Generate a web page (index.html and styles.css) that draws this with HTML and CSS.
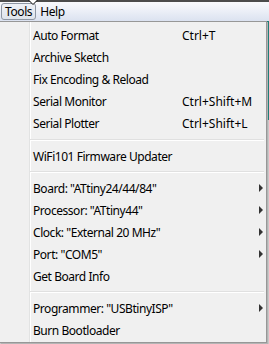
FILE: index.html
```html
<!DOCTYPE html>
<html lang="en">
<head>
  <meta charset="utf-8" />
  <title>Tools menu</title>
  <link rel="stylesheet" href="styles.css">
</head>
<body>
  <div id="window">
    <div id="menubar">
      <span class="top-item active">Tools</span>
      <span class="top-item">Help</span>
      <svg class="cursor" width="10" height="7" viewBox="0 0 10 7">
        <path d="M0.5 0 L5 4.5 L9.5 0" fill="#fff" stroke="#000" stroke-width="1"/>
      </svg>
    </div>

    <div id="menu">
      <div class="item"><span class="label">Auto Format</span><span class="shortcut">Ctrl+T</span></div>
      <div class="item"><span class="label">Archive Sketch</span></div>
      <div class="item"><span class="label">Fix Encoding &amp; Reload</span></div>
      <div class="item"><span class="label">Serial Monitor</span><span class="shortcut">Ctrl+Shift+M</span></div>
      <div class="item"><span class="label">Serial Plotter</span><span class="shortcut">Ctrl+Shift+L</span></div>
      <div class="separator first"></div>
      <div class="item"><span class="label">WiFi101 Firmware Updater</span></div>
      <div class="separator"></div>
      <div class="item"><span class="label">Board: "ATtiny24/44/84"</span><span class="arrow"></span></div>
      <div class="item"><span class="label">Processor: "ATtiny44"</span><span class="arrow"></span></div>
      <div class="item"><span class="label">Clock: "External 20 MHz"</span><span class="arrow"></span></div>
      <div class="item"><span class="label">Port: "COM5"</span><span class="arrow"></span></div>
      <div class="item"><span class="label">Get Board Info</span></div>
      <div class="separator"></div>
      <div class="item"><span class="label">Programmer: "USBtinyISP"</span><span class="arrow"></span></div>
      <div class="item"><span class="label">Burn Bootloader</span></div>
    </div>
  </div>
</body>
</html>
```

FILE: styles.css
```css
* {
  margin: 0;
  padding: 0;
  box-sizing: border-box;
}

body {
  background-color: #a0a0a0;
  font-family: "Noto Sans", "Open Sans", sans-serif;
  font-size: 12px;
  color: #000;
  width: 269px;
  height: 344px;
  overflow: hidden;
}

#window {
  width: 269px;
  height: 344px;
  background: linear-gradient(to bottom, #1f7f78 0, #1f7f78 120px, #c8c8c8 120px);
}

/* Menu bar */
#menubar {
  position: relative;
  height: 21px;
  border-top: 2px solid #4c4c4c;
  background: linear-gradient(to bottom, #f9fafd 0%, #eef1f8 40%, #dbe2f0 100%);
  display: flex;
  align-items: center;
  padding-left: 1px;
  letter-spacing: -0.4px;
}

.top-item {
  height: 17px;
  line-height: 15px;
  padding: 0 3px 0 3px;
  border: 1px solid transparent;
  border-radius: 3px;
}

.top-item.active {
  border-color: #8e96a3;
  background: linear-gradient(to bottom, #eef1f6, #dfe4ec);
}

.cursor {
  position: absolute;
  left: 28px;
  top: -2px;
}

/* Drop-down menu */
#menu {
  width: 267px;
  padding: 2px 0 1px 0;
  border-top: 1px solid #979797;
  border-right: 1px solid #979797;
  border-bottom: 1px solid #979797;
  box-shadow: 1px 1px 0 #b4b4b4;
  background: linear-gradient(to right, #f0f0f0 29px, #e2e3e3 29px, #e2e3e3 30px, #ffffff 30px, #ffffff 31px, #f0f0f0 31px);
}

.item {
  height: 22px;
  display: grid;
  grid-template-columns: 149px 1fr 10px;
  align-items: center;
  padding-left: 33px;
  padding-right: 1px;
  white-space: nowrap;
}

.label {
  letter-spacing: -0.45px;
}

.shortcut {
  grid-column: 2;
}

.arrow {
  grid-column: 3;
  justify-self: start;
  margin-left: 4px;
  width: 0;
  height: 0;
  border-top: 4px solid transparent;
  border-bottom: 4px solid transparent;
  border-left: 4px solid #333;
}

.separator {
  height: 10px;
  margin: 0 2px 0 30px;
  padding-top: 4px;
}

.separator.first {
  height: 11px;
  padding-top: 5px;
}

.separator::before {
  content: "";
  display: block;
  height: 1px;
  background-color: #e0e0e0;
  border-bottom: 1px solid #ffffff;
  box-sizing: content-box;
}
```
